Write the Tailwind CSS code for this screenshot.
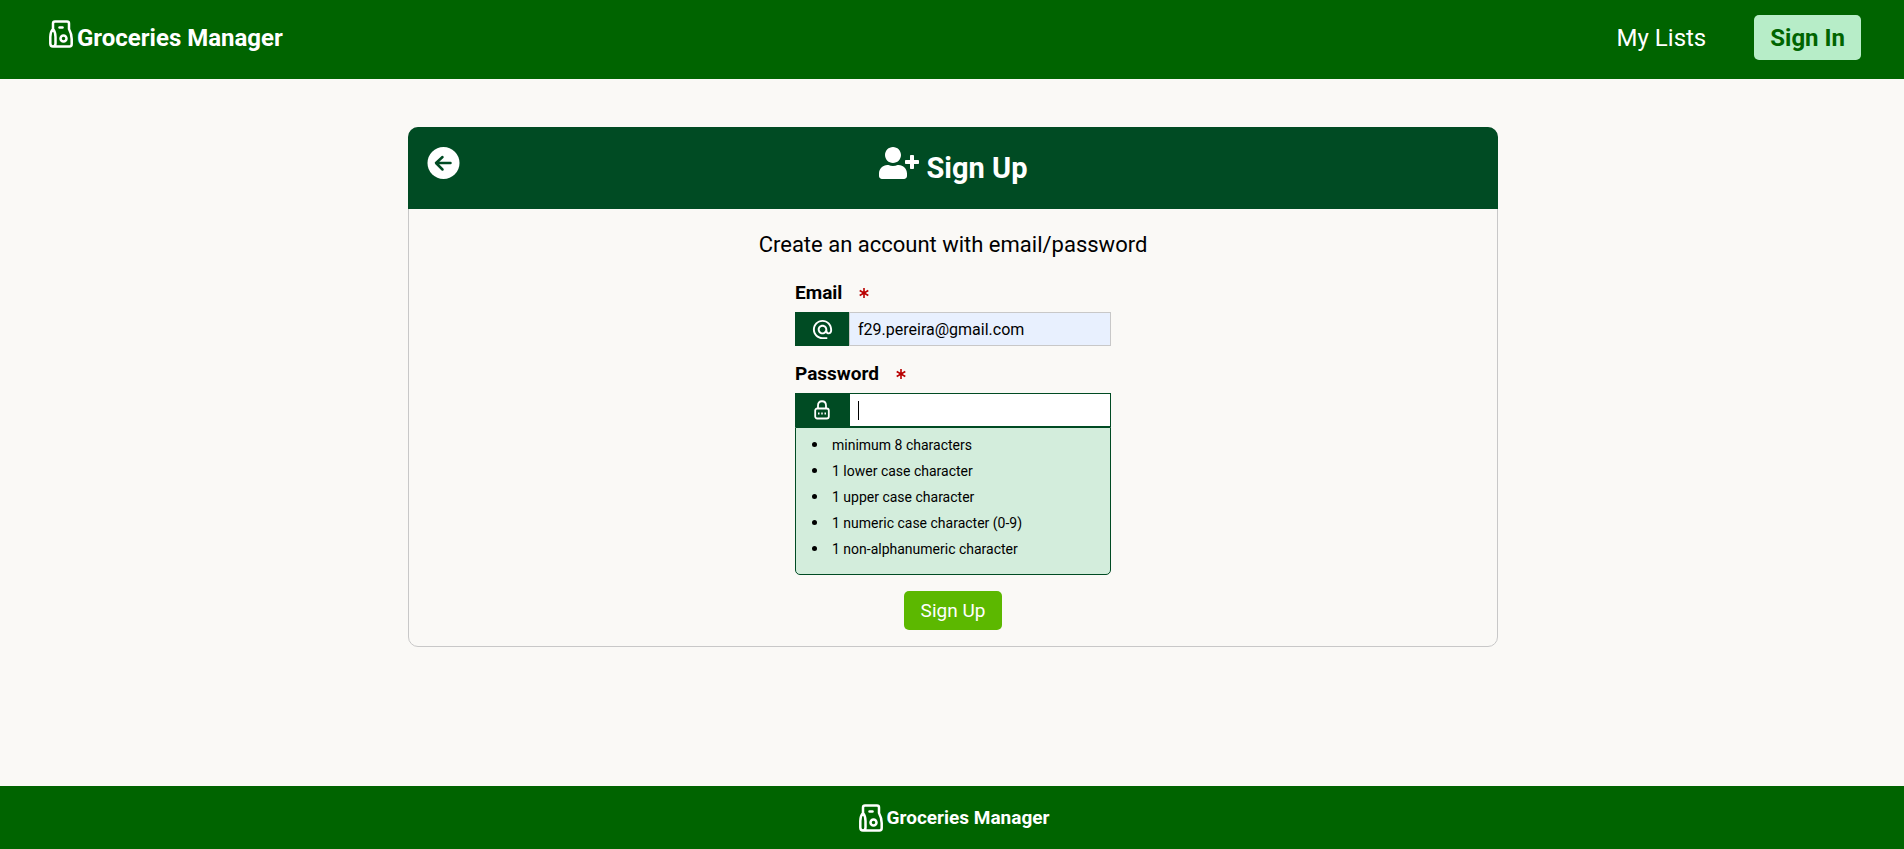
<!DOCTYPE html>
<html lang="en">
<head>
<meta charset="utf-8">
<meta name="viewport" content="width=device-width, initial-scale=1">
<title>Groceries Manager - Sign Up</title>
<script src="https://cdn.jsdelivr.net/npm/@tailwindcss/browser@4"></script>
</head>
<body class="flex min-h-screen flex-col bg-[#faf9f6] font-['Roboto',sans-serif] text-base text-black">
<svg class="hidden" aria-hidden="true">
  <symbol id="bag" viewBox="0 0 24 28" fill="none" stroke="currentColor" stroke-width="2.500" stroke-linecap="round" stroke-linejoin="round">
    <path d="M4 9V3.500Q4 1.500 6 1.500H18Q20 1.500 20 3.500V9Q22.700 14 22.700 19V24Q22.700 26.500 20.500 26.500H4Q1.300 26.500 1.300 23.500V17Q1.300 12 4 9Q6.500 12 6.500 17V23.500Q6.500 26.500 4 26.500"/>
    <path d="M10.500 7.500H13.500"/><circle cx="14.500" cy="18.500" r="3"/>
  </symbol>
</svg>
<header class="flex h-[79px] items-start justify-between bg-[#006400] pr-[43px] pl-[49px] text-2xl text-white">
  <a href="#" class="flex pt-5 font-bold">
    <svg class="h-7 w-6 shrink-0" aria-hidden="true"><use href="#bag"/></svg>
    <span class="ml-1 pt-1 leading-7">Groceries Manager</span>
  </a>
  <nav class="flex items-center gap-12 pt-[15px]">
    <a href="#">My Lists</a>
    <a href="#" class="rounded-[5px] bg-[#b7edc8] px-4 pt-px leading-11 font-bold text-[#006400]">Sign In</a>
  </nav>
</header>
<main class="flex-1 pt-12 pr-4 pb-12 pl-[18px]">
  <section class="mx-auto max-w-[1090px] rounded-[10px] border border-[#c8c8c8] pb-4">
    <div class="relative -mx-px -mt-px flex h-[82px] justify-center rounded-t-[10px] bg-[#004b23] text-white">
      <button type="button" aria-label="Back" class="absolute top-5 left-[19px]">
        <svg class="size-[33px]" viewBox="0 0 33 33" fill="none" aria-hidden="true"><circle cx="16.500" cy="16" r="16" fill="#fff"/><path d="M23.500 16H9.500M15.500 10L9 16L15.500 22.500" stroke="#004b23" stroke-width="2.500" stroke-linecap="round" stroke-linejoin="round"/></svg>
      </button>
      <h1 class="flex gap-2 pt-5 text-[29px] font-bold">
        <svg class="h-8 w-10" viewBox="0 0 640 512" fill="currentColor" aria-hidden="true"><path d="M624 208h-64v-64c0-8.800-7.200-16-16-16h-32c-8.800 0-16 7.200-16 16v64h-64c-8.800 0-16 7.200-16 16v32c0 8.800 7.200 16 16 16h64v64c0 8.800 7.200 16 16 16h32c8.800 0 16-7.200 16-16v-64h64c8.800 0 16-7.200 16-16v-32c0-8.800-7.200-16-16-16zm-400 48c70.700 0 128-57.300 128-128S294.700 0 224 0 96 57.300 96 128s57.300 128 128 128zm89.600 32h-16.700c-22.200 10.200-46.900 16-72.900 16s-50.600-5.800-72.900-16h-16.700C60.200 288 0 348.200 0 422.400V464c0 26.500 21.500 48 48 48h352c26.500 0 48-21.500 48-48v-41.600c0-74.200-60.200-134.400-134.400-134.400z"/></svg>
        <span class="leading-[42px]">Sign Up</span>
      </h1>
    </div>
    <h2 class="pt-5 text-center text-[22px] leading-8">Create an account with email/password</h2>
    <form class="mx-auto mt-[18px] flex w-79 flex-col">
      <label for="email" class="flex h-7 items-center gap-4 text-[19px] font-bold">Email
        <svg class="size-3" viewBox="0 0 12 12" stroke="#b90000" stroke-width="1.600" aria-hidden="true"><path d="M6 1V11M1.700 3.500L10.300 8.500M1.700 8.500L10.300 3.500"/></svg></label>
      <div class="mt-[5px] flex h-[34px]">
        <span class="flex w-[54px] items-center justify-center bg-[#004b23] text-white">
          <svg class="size-[23px]" viewBox="0 0 24 24" fill="currentColor" aria-hidden="true"><path d="M12 2C6.480 2 2 6.480 2 12s4.480 10 10 10h5v-2h-5c-4.340 0-8-3.660-8-8s3.660-8 8-8 8 3.660 8 8v1.430c0 .79-.71 1.570-1.500 1.570s-1.500-.78-1.500-1.570V12c0-2.760-2.240-5-5-5s-5 2.240-5 5 2.240 5 5 5c1.380 0 2.640-.56 3.540-1.470.65.89 1.770 1.470 2.960 1.470 1.970 0 3.500-1.600 3.500-3.570V12c0-5.520-4.480-10-10-10zm0 13c-1.660 0-3-1.340-3-3s1.340-3 3-3 3 1.340 3 3-1.340 3-3 3z"/></svg>
        </span>
        <input id="email" type="email" value="f29.pereira@gmail.com" required class="min-w-0 flex-1 border border-[#c8c8c8] bg-[#e8f0fe] px-2 pt-px outline-none">
      </div>
      <label for="password" class="mt-[14px] flex h-7 items-center gap-4 text-[19px] font-bold">Password
        <svg class="size-3" viewBox="0 0 12 12" stroke="#b90000" stroke-width="1.600" aria-hidden="true"><path d="M6 1V11M1.700 3.500L10.300 8.500M1.700 8.500L10.300 3.500"/></svg></label>
      <div class="relative mt-[5px] flex h-[34px]">
        <span class="flex w-[54px] items-center justify-center bg-[#004b23] text-white">
          <svg class="h-5 w-4" viewBox="0 0 16 20" fill="none" stroke="currentColor" stroke-width="1.800" aria-hidden="true"><rect x="1.200" y="8.500" width="13.600" height="10" rx="2"/><path d="M4 8.500V5.500Q4 1.250 8 1.250T12 5.500V8.500"/><path d="M4 13.500H5.500M7.250 13.500H8.750M10.500 13.500H12"/></svg>
        </span>
        <input id="password" type="password" required class="min-w-0 flex-1 border border-[#004b23] bg-white px-2 caret-transparent outline-none">
        <span class="absolute top-2 left-[63px] h-[19px] w-px bg-black" aria-hidden="true"></span>
      </div>
      <ul class="list-disc rounded-b-[5px] border border-[#004b23] bg-[#d3eddc] pt-1 pb-3 pl-[33px] text-sm leading-[26px] marker:text-base">
        <li class="pl-[3px]">minimum 8 characters</li>
        <li class="pl-[3px]">1 lower case character</li>
        <li class="pl-[3px]">1 upper case character</li>
        <li class="pl-[3px]">1 numeric case character (0-9)</li>
        <li class="pl-[3px]">1 non-alphanumeric character</li>
      </ul>
      <button type="submit" class="mt-4 self-center rounded-[5px] bg-[#5cb800] px-[17px] text-[19px] leading-[39px] text-white">Sign Up</button>
    </form>
  </section>
</main>
<footer class="flex h-[63px] items-center justify-center bg-[#006400] pt-px pl-1 text-[19px] font-bold text-white">
  <a href="#" class="flex items-center gap-1"><svg class="h-7 w-6" aria-hidden="true"><use href="#bag"/></svg>Groceries Manager</a>
</footer>
</body>
</html>
